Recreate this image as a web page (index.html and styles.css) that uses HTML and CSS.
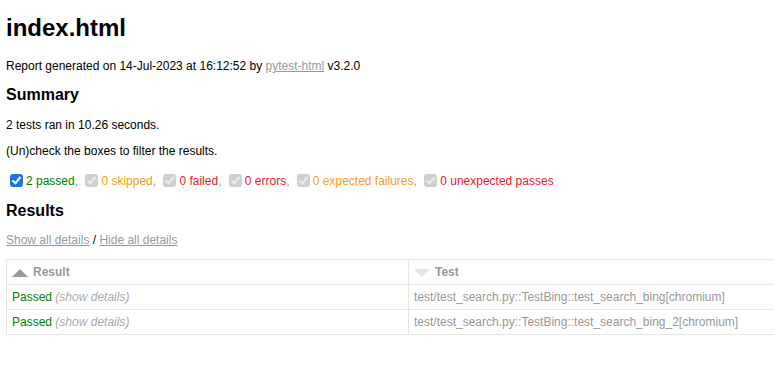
FILE: index.html
```html
<!doctype html>
<html>
<head>
<meta charset="utf-8">
<title>index.html</title>
<link rel="stylesheet" href="styles.css">
</head>
<body>
<h1>index.html</h1>
<p>Report generated on 14-Jul-2023 at 16:12:52 by <a href="#">pytest-html</a> v3.2.0</p>
<h2 class="summary">Summary</h2>
<p>2 tests ran in 10.26 seconds. </p>
<p>(Un)check the boxes to filter the results.</p>
<p class="filter"><span class="check on"></span><span class="passed">2 passed</span>, <span class="check off"></span><span class="skipped">0 skipped</span>, <span class="check off"></span><span class="failed">0 failed</span>, <span class="check off"></span><span class="error">0 errors</span>, <span class="check off"></span><span class="xfailed">0 expected failures</span>, <span class="check off"></span><span class="xpassed">0 unexpected passes</span></p>
<h2>Results</h2>
<p class="toggles"><a href="#">Show all details</a> / <a href="#">Hide all details</a></p>
<table id="results-table">
	<thead>
		<tr>
			<th class="col-result asc active"><div class="sort-icon"></div>Result</th>
			<th class="col-name inactive"><div class="sort-icon"></div>Test</th>
		</tr>
	</thead>
	<tbody>
		<tr>
			<td class="passed">Passed <span class="expander">(show details)</span></td>
			<td>test/test_search.py::TestBing::test_search_bing[chromium]</td>
		</tr>
		<tr>
			<td class="passed">Passed <span class="expander">(show details)</span></td>
			<td>test/test_search.py::TestBing::test_search_bing_2[chromium]</td>
		</tr>
	</tbody>
</table>
</body>
</html>
```

FILE: styles.css
```css
body{font-family:"Liberation Sans",Helvetica,Arial,sans-serif; font-size:12px; min-width:800px; color:#999; margin:0 6px 8px;}
h1{font-size:24px; color:#000; margin:14px 0 17px;}
h2{font-size:16px; color:#000; margin:13px 0;}
h2.summary{margin-bottom:14px;}
p{color:#000; margin:12px 0;}
a{color:#999;}
p.filter{color:#999; line-height:18px; height:17px; margin-top:14px;}
.check{display:inline-block; vertical-align:-2px; width:13px; height:13px; border-radius:3px; margin:0 3px 0 4px; position:relative;}
.check.on{background:#1a74e8;}
.check.off{background:#cfcfcf;}
.check:after{content:""; position:absolute; left:4px; top:1px; width:3px; height:7px; border:solid #fff; border-width:0 2px 2px 0; transform:rotate(40deg);}
.check.off:after{border-color:#ebebeb;}
.passed{color:green;}
.skipped,.xfailed{color:#f89a1c;}
.failed,.error,.xpassed{color:#ee1731;}
.toggles{color:#000;}
table{border-collapse:collapse;}
#results-table{border:1px solid #e6e6e6; color:#999; font-size:12px; width:100%;}
#results-table th,#results-table td{padding:5px; border:1px solid #e6e6e6; text-align:left;}
#results-table th{font-weight:bold;}
.col-result{width:391px;}
#results-table td.passed{color:green;}
.expander{color:#aaa; font-style:italic;}
.sort-icon{float:left; width:0; height:0; margin:4px 5px 0 0; border-left:8px solid transparent; border-right:8px solid transparent;}
.asc.active .sort-icon{border-bottom:8px solid #999;}
.inactive .sort-icon{border-top:8px solid #e6e6e6;}
```
